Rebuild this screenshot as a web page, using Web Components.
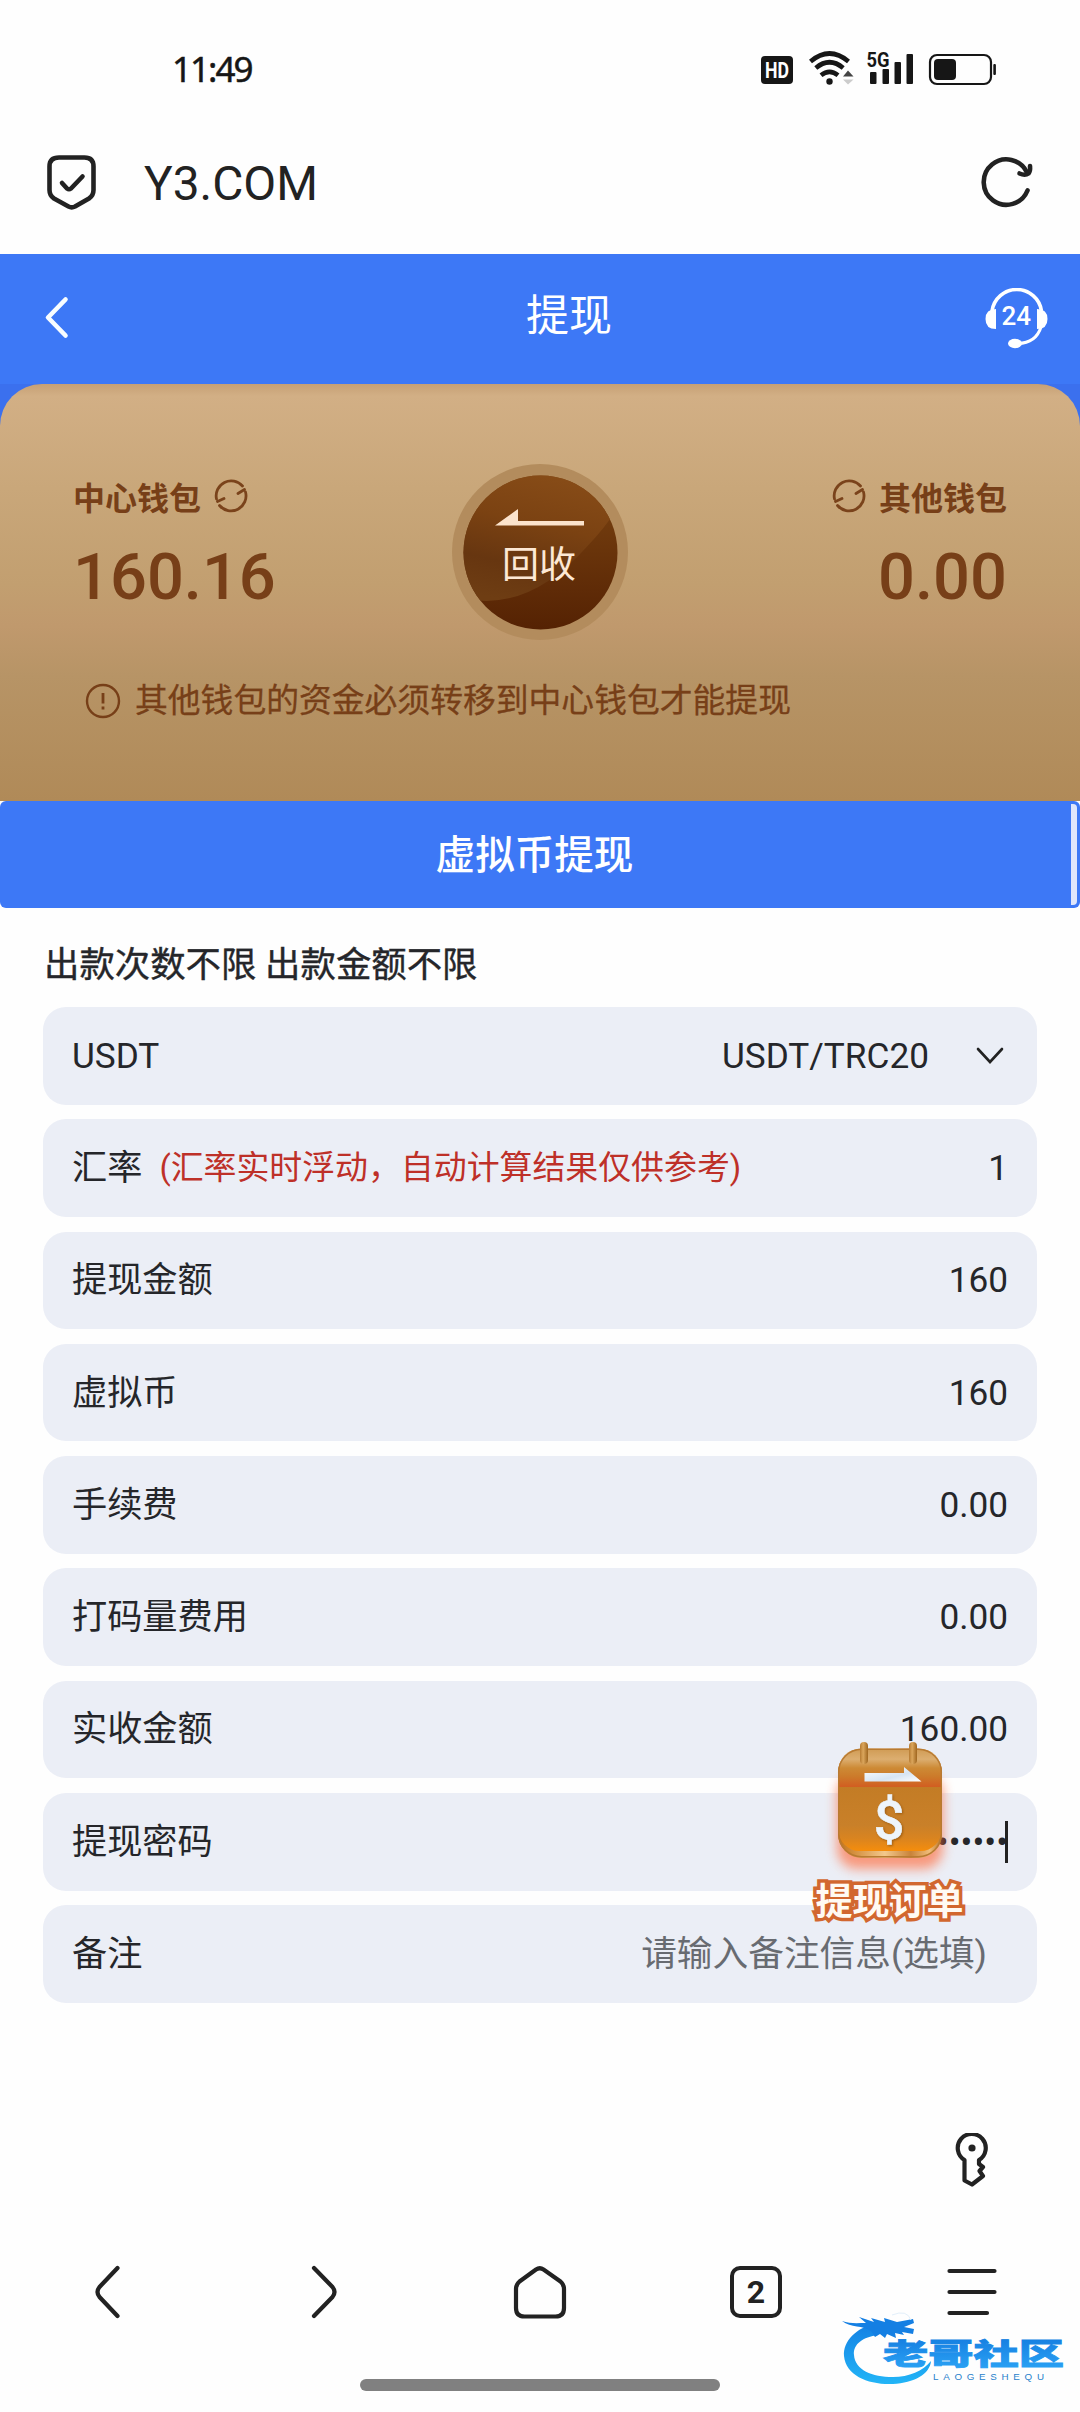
<!DOCTYPE html>
<html lang="zh-CN">
<head>
<meta charset="utf-8">
<title>提现</title>
<style>
  body {
    margin: 0;
    width: 1080px;
    height: 2412px;
    overflow: hidden;
    background: #fefefe;
    color: #25262a;
    font-family: Roboto, "Noto Sans CJK SC", sans-serif;
  }
</style>
</head>
<body>
<withdraw-app></withdraw-app>

<script>
class StatusBar extends HTMLElement {
  constructor() {
    super();

    this.attachShadow({mode: 'open'}).innerHTML = `
        <style>
          :host {
            display: flex;
            justify-content: space-between;
            height: 110px;
            box-sizing: border-box;
            padding: 48px 82px 0 172px;
            color: #161616;
          }
          .time {
            margin-top: -1px;
            font: 400 35px/44px "Noto Sans", sans-serif;
            letter-spacing: -2px;
            -webkit-text-stroke: .5px;
          }
          svg {
            display: block;
          }
        </style>
        <div class="time">11:49</div>
        <svg width="240" height="40" viewBox="758 48 240 40" fill="#161616">
          <rect x="761" y="56" width="32" height="28" rx="4"/>
          <text x="777" y="78.2" fill="#fff" font-family="Roboto" font-weight="700" font-size="22" text-anchor="middle" textLength="24" lengthAdjust="spacingAndGlyphs">HD</text>
          <g fill="none" stroke="#161616" stroke-width="4.6">
            <path d="M810.5 61.5Q829.5 45.5 848.5 61.5"/>
            <path d="M815.8 68Q829.5 56.5 843.2 68"/>
            <path d="M821 75.2Q829.5 68.5 838 75.2"/>
          </g>
          <circle cx="829.5" cy="81.5" r="3.2"/>
          <path d="M843 76.5L848 70.5L853.5 76.5Z" fill="#444"/>
          <path d="M843 79.5L848 84.5L853.5 79.5Z" fill="#ccc"/>
          <text x="866.5" y="66.8" font-family="Roboto" font-weight="700" font-size="20" textLength="23" lengthAdjust="spacingAndGlyphs">5G</text>
          <rect x="870" y="72" width="6.5" height="12" rx="1"/>
          <rect x="882.5" y="69" width="6.5" height="15" rx="1"/>
          <rect x="894.5" y="62" width="6.5" height="22" rx="1"/>
          <rect x="906.5" y="54" width="6.5" height="30" rx="1"/>
          <rect x="930" y="55" width="61" height="29" rx="7" fill="none" stroke="#161616" stroke-width="2.2"/>
          <rect x="934" y="59" width="22" height="21" rx="4"/>
          <rect x="993.3" y="64" width="2.6" height="11" rx="1"/>
        </svg>
    `;
  }
}

class AddressBar extends HTMLElement {
  constructor() {
    super();

    this.attachShadow({mode: 'open'}).innerHTML = `
        <style>
          :host {
            display: flex;
            align-items: center;
            height: 144px;
            box-sizing: border-box;
            padding: 0 46px;
            color: #222;
          }
          .url {
            flex: 1;
            margin-left: 46px;
            font-size: 47.8px;
            line-height: 60px;
            padding-top: 3px;
          }
          svg {
            fill: none;
            stroke: #222;
            stroke-width: 4.6;
            stroke-linecap: round;
            stroke-linejoin: round;
          }
        </style>
        <svg width="52" height="56" viewBox="46 155 52 56">
          <path d="M59 158.5H84.5Q93.5 158.5 93.5 167.5V191Q93.5 196.5 89 199.5L75 207.5Q71.7 209.2 68.5 207.5L54 199.5Q49.5 196.5 49.5 191V167.5Q49.5 158.5 59 158.5Z"/>
          <path d="M62 184L67 189.5Q69 191 71 189.5L82.5 177.5"/>
        </svg>
        <div class="url"><slot></slot></div>
        <svg width="54" height="54" viewBox="979 155 54 54">
          <path d="M1026.5 190.5A22.7 22.7 0 1 1 1026 172.5"/>
          <path d="M1018.5 173.5Q1024 176 1027.5 173.5Q1029.5 171.5 1029 166"/>
        </svg>
    `;
  }
}

class PageHeader extends HTMLElement {
  constructor() {
    super();

    this.attachShadow({mode: 'open'}).innerHTML = `
        <style>
          :host {
            display: flex;
            align-items: center;
            justify-content: space-between;
            height: 130px;
            box-sizing: border-box;
            padding: 0 30px 3px 40px;
            background: #3d78f6;
            color: #fff;
          }
          .title {
            margin-left: 80px;
            font-size: 43px;
            line-height: 60px;
            padding-bottom: 3px;
          }
          .service {
            margin-top: 2px;
          }
        </style>
        <svg width="34" height="48" viewBox="40 294 34 48" fill="none" stroke="#f8fdff" stroke-width="4.6" stroke-linecap="round" stroke-linejoin="round">
          <path d="M65.5 299.5L48 317.5L65.5 335.5"/>
        </svg>
        <div class="title"><slot></slot></div>
        <svg class="service" width="66" height="62" viewBox="984 288 66 62" fill="none" stroke="#fff" stroke-width="3.6">
          <path d="M992 311A25 25 0 0 1 1041.5 311"/>
          <path d="M1041 327Q1036 343 1018 343.5" stroke-width="3"/>
          <path d="M996 309V329Q985.5 329 985.5 319Q985.5 309 996 309ZM1037 309V329Q1047.5 329 1047.5 319Q1047.5 309 1037 309Z" fill="#fff" stroke="none"/>
          <ellipse cx="1015" cy="343.5" rx="7" ry="4.7" fill="#fff" stroke="none"/>
          <text x="1016.3" y="325.3" fill="#fff" stroke="none" font-family="Roboto" font-weight="500" font-size="26" text-anchor="middle">24</text>
        </svg>
    `;
  }
}

class WalletBalance extends HTMLElement {
  constructor() {
    super();

    this.attachShadow({mode: 'open'}).innerHTML = `
        <style>
          :host {
            display: flex;
            flex-direction: column;
            width: 300px;
          }
          .name {
            display: flex;
            align-items: center;
            gap: 13px;
            height: 40px;
            font-size: 32px;
            font-weight: 700;
          }
          .amount {
            margin-top: 20px;
            font-size: 65px;
            font-weight: 500;
            line-height: 82px;
          }
          :host([align="right"]) {
            align-items: flex-end;
          }
          :host([align="right"]) .name {
            flex-direction: row-reverse;
          }
        </style>
        <div class="name">
          <span>${this.getAttribute('name')}</span>
          <svg width="34" height="34" viewBox="0 0 34 34" fill="none" stroke="#7a431b" stroke-width="2.8" stroke-linecap="round">
            <path d="M2.5 20A15 15 0 0 1 28.5 7M3.5 22.5L10 19.5"/>
            <path d="M31.5 13A15 15 0 0 1 5.5 26.5M30.5 10.5L24 14.5"/>
          </svg>
        </div>
        <div class="amount">${this.getAttribute('amount')}</div>
    `;
  }
}

class RecycleButton extends HTMLElement {
  constructor() {
    super();

    this.attachShadow({mode: 'open'}).innerHTML = `
        <style>
          :host {
            display: block;
            width: 176px;
            height: 176px;
          }
          svg {
            display: block;
          }
        </style>
        <svg width="176" height="176" viewBox="452 463.5 176 176">
          <defs>
            <linearGradient id="base" x1="0" y1="0" x2="0" y2="1">
              <stop offset="0" stop-color="#7c4512"/>
              <stop offset="1" stop-color="#552203"/>
            </linearGradient>
            <linearGradient id="sheen" x1=".6" y1="0" x2=".3" y2="1">
              <stop offset="0" stop-color="#8b4f19"/>
              <stop offset=".45" stop-color="#7b4212"/>
              <stop offset=".75" stop-color="#673610"/>
              <stop offset="1" stop-color="#6e3d13"/>
            </linearGradient>
            <clipPath id="disc"><circle cx="540.5" cy="552" r="77"/></clipPath>
          </defs>
          <circle cx="540" cy="551.5" r="88" fill="#b38c5d"/>
          <circle cx="540.5" cy="552" r="77" fill="url(#base)"/>
          <path d="M450 460H640V470Q616 516 588 545Q535 605 478 600L450 590Z" fill="url(#sheen)" clip-path="url(#disc)"/>
          <path d="M495 525L518 508.5V520.5H584V525Z" fill="#fbe3cc"/>
          <text x="539" y="577.8" fill="#fde8d4" font-family="Noto Sans CJK SC, sans-serif" font-size="37" text-anchor="middle">回收</text>
        </svg>
    `;
  }
}

class WalletCard extends HTMLElement {
  constructor() {
    super();

    this.attachShadow({mode: 'open'}).innerHTML = `
        <style>
          :host {
            display: block;
            height: 417px;
            background: #3b70ee;
            color: #773f18;
          }
          .card {
            height: 417px;
            box-sizing: border-box;
            padding: 80px 73px 0;
            border-radius: 42px 42px 0 0;
            background: linear-gradient(#c6a075 0, #d2af85 12px, #c9a77a 25%, #c29f70 48%, #c0996d 58%, #b79466 70%, #b08a58 100%);
          }
          .top {
            display: flex;
            justify-content: space-between;
            align-items: flex-start;
          }
          wallet-balance {
            margin-top: 12px;
          }
          .notice {
            display: flex;
            align-items: center;
            gap: 14px;
            margin: 37px 0 0 12px;
            font-size: 32.8px;
            line-height: 48px;
            -webkit-text-stroke: .3px;
          }
        </style>
        <div class="card">
          <div class="top">
            <wallet-balance name="中心钱包" amount="160.16"></wallet-balance>
            <recycle-button></recycle-button>
            <wallet-balance name="其他钱包" amount="0.00" align="right"></wallet-balance>
          </div>
          <div class="notice">
            <svg width="36" height="36" viewBox="0 0 36 36" fill="none" stroke="#773f18" stroke-width="2.4">
              <circle cx="18" cy="18" r="16"/>
              <path d="M18 10V20.5M18 23.5V26.5" stroke-width="2.8"/>
            </svg>
            <slot></slot>
          </div>
        </div>
    `;
  }
}

class MethodTab extends HTMLElement {
  constructor() {
    super();

    this.attachShadow({mode: 'open'}).innerHTML = `
        <style>
          :host {
            display: flex;
            height: 107px;
            box-sizing: border-box;
            padding: 3px;
            border-radius: 6px;
            background: #3d78f6;
            color: #fff;
            font-size: 39.6px;
            font-weight: 500;
            line-height: 104px;
          }
          .name {
            flex: 1;
            text-align: center;
            padding-right: 5px;
          }
          .next {
            width: 6px;
            border-radius: 0 4px 4px 0;
            background: #dfe6fb;
          }
        </style>
        <div class="name"><slot></slot></div>
        <div class="next"></div>
    `;
  }
}

class FormRow extends HTMLElement {
  constructor() {
    super();

    this.attachShadow({mode: 'open'}).innerHTML = `
        <style>
          :host {
            display: flex;
            align-items: center;
            height: 97.6px;
            box-sizing: border-box;
            padding: 0 29px;
            border-radius: 23px;
            background: #ebeef6;
            font-size: 35.2px;
            line-height: 50px;
          }
          .hint {
            margin-left: 17px;
            font-size: 32.9px;
            color: #be3028;
          }
          .value {
            display: flex;
            align-items: center;
            margin-left: auto;
          }
        </style>
        <span>${this.getAttribute('label')}</span>
        <span class="hint">${this.getAttribute('hint') || ''}</span>
        <span class="value"><slot></slot></span>
    `;
  }
}

class OrderButton extends HTMLElement {
  constructor() {
    super();

    this.attachShadow({mode: 'open'}).innerHTML = `
        <style>
          /* floats over the form */
          :host {
            position: absolute;
            left: 804px;
            top: 1732px;
            width: 172px;
            height: 200px;
          }
          svg {
            display: block;
          }
        </style>
        <svg width="172" height="200" viewBox="804 1732 172 200">
          <defs>
            <linearGradient id="lid" x1="0" y1="0" x2="0" y2="1">
              <stop offset="0" stop-color="#cf9a52"/>
              <stop offset=".28" stop-color="#dcae70"/>
              <stop offset=".5" stop-color="#cd8a35"/>
              <stop offset=".72" stop-color="#cc7a2a"/>
              <stop offset="1" stop-color="#d35a20"/>
            </linearGradient>
            <linearGradient id="body" x1="0" y1="0" x2="0" y2="1">
              <stop offset="0" stop-color="#c37c25"/>
              <stop offset=".6" stop-color="#c98029"/>
              <stop offset=".8" stop-color="#d98420"/>
              <stop offset="1" stop-color="#f58d0c"/>
            </linearGradient>
            <linearGradient id="rim">
              <stop offset="0" stop-color="#c37217"/>
              <stop offset=".45" stop-color="#f3c88c"/>
              <stop offset=".7" stop-color="#c8833a"/>
              <stop offset=".88" stop-color="#f0bd7a"/>
              <stop offset="1" stop-color="#b9711f"/>
            </linearGradient>
            <linearGradient id="peg">
              <stop offset="0" stop-color="#b67b32"/>
              <stop offset=".4" stop-color="#dba65c"/>
              <stop offset="1" stop-color="#9f661f"/>
            </linearGradient>
            <linearGradient id="arrow" x1="0" y1="0" x2="1" y2="1">
              <stop offset="0" stop-color="#fff"/>
              <stop offset=".6" stop-color="#d7e5f3"/>
              <stop offset="1" stop-color="#fff"/>
            </linearGradient>
            <clipPath id="face"><rect x="838.5" y="1749" width="103" height="102" rx="21"/></clipPath>
            <filter id="glow" x="-30%" y="-30%" width="160%" height="160%"><feGaussianBlur stdDeviation="6"/></filter>
          </defs>
          <rect x="837" y="1774" width="106" height="95" rx="20" fill="#ff6a3a" opacity=".65" filter="url(#glow)"/>
          <rect x="838" y="1748.5" width="104" height="109.5" rx="24" fill="url(#rim)"/>
          <g clip-path="url(#face)">
            <rect x="838" y="1748" width="104" height="40" fill="url(#lid)"/>
            <rect x="838" y="1787" width="104" height="64" fill="url(#body)"/>
          </g>
          <rect x="838.7" y="1749.2" width="102.6" height="107.6" rx="23" fill="none" stroke="#b87a32" stroke-width="1.4"/>
          <rect x="860" y="1742" width="8" height="22" rx="4" fill="url(#peg)"/>
          <rect x="909" y="1742" width="8" height="22" rx="4" fill="url(#peg)"/>
          <path d="M864.5 1773H904V1767L921.5 1781.5H864.5Z" fill="url(#arrow)"/>
          <text x="889" y="1838.5" fill="#eef5fb" stroke="#eef5fb" stroke-width=".6" font-family="Roboto" font-weight="500" font-size="54" text-anchor="middle" style="filter: drop-shadow(1px 1px 1px #9b5c14)">$</text>
          <text x="889.5" y="1914.5" fill="#fffaf3" stroke="#d2672f" stroke-width="7" paint-order="stroke" font-family="Noto Sans CJK SC, sans-serif" font-weight="700" font-size="37" text-anchor="middle">提现订单</text>
        </svg>
    `;
  }
}

class NavBar extends HTMLElement {
  constructor() {
    super();

    this.attachShadow({mode: 'open'}).innerHTML = `
        <style>
          :host {
            display: block;
            color: #222;
          }
          .key {
            display: block;
            margin: 0 90px 0 auto;
          }
          .items {
            display: grid;
            grid-template-columns: repeat(5, 216px);
            justify-items: center;
            margin-top: 75px;
          }
          svg {
            fill: none;
            stroke: #222;
            stroke-width: 4.2;
            stroke-linecap: round;
            stroke-linejoin: round;
          }
          .tabs {
            box-sizing: border-box;
            width: 52px;
            height: 52px;
            margin-top: 2px;
            border: 4.2px solid #222;
            border-radius: 10px;
            text-align: center;
            font: 700 32px/44px Roboto, sans-serif;
          }
          .handle {
            width: 360px;
            height: 12px;
            margin: 59px auto 0;
            border-radius: 6px;
            background: #808080;
          }
        </style>
        <svg class="key" width="36" height="56" viewBox="954 2132 36 56">
          <path d="M964.5 2159A14 14 0 1 1 979 2159V2163L983 2166L979.5 2170L983 2175L972 2183.5L964.5 2179.5Z"/>
          <circle cx="972" cy="2147" r="3.6" fill="#222" stroke="none"/>
        </svg>
        <div class="items">
          <svg width="56" height="56" viewBox="80 2264 56 56"><path d="M117.5 2268L99.5 2287Q95.5 2292 99.5 2297L117.5 2316"/></svg>
          <svg width="56" height="56" viewBox="296 2264 56 56"><path d="M314 2268L332.5 2287Q336.5 2292 332.5 2297L314 2316"/></svg>
          <svg width="56" height="56" viewBox="512 2264 56 56"><path d="M536 2269.5Q539.8 2267 543.5 2269.5L560.5 2281.5Q564 2284.5 564 2289V2308Q564 2316.5 555.5 2316.5H524.5Q516 2316.5 516 2308V2289Q516 2284.5 519.5 2281.5Z"/></svg>
          <div class="tabs">2</div>
          <svg width="56" height="56" viewBox="944 2264 56 56"><path d="M949.5 2271H994.5M949.5 2292H994.5M949.5 2313H987"/></svg>
        </div>
        <div class="handle"></div>
    `;
  }
}

class CommunityLogo extends HTMLElement {
  constructor() {
    super();

    this.attachShadow({mode: 'open'}).innerHTML = `
        <style>
          :host {
            position: absolute;
            left: 836px;
            top: 2308px;
            width: 236px;
            height: 84px;
          }
        </style>
        <svg width="236" height="84" viewBox="836 2308 236 84">
          <defs>
            <linearGradient id="sea" gradientUnits="userSpaceOnUse" x1="0" y1="2322" x2="0" y2="2384">
              <stop offset="0" stop-color="#147fe3"/>
              <stop offset="1" stop-color="#22b5f7"/>
            </linearGradient>
            <linearGradient id="word" gradientUnits="userSpaceOnUse" x1="0" y1="2340" x2="0" y2="2370">
              <stop offset="0" stop-color="#1781e2"/>
              <stop offset="1" stop-color="#2ba3f5"/>
            </linearGradient>
          </defs>
          <path d="M876 2323C856 2328 843 2341 844 2356C846 2376 869 2385 893 2384C914 2383 930 2374 931 2361C923 2371 909 2377 893 2377C872 2377 855 2370 854 2355C853 2344 863 2337 878 2335Z" fill="url(#sea)"/>
          <path d="M842 2321C850 2324 858 2323 866 2323L859 2317L874 2322L871 2318L885 2322L884 2318L897 2322L913 2319L914 2323L904 2327L914 2329L913 2334L902 2332L904 2335L895 2333L896 2338L887 2334L885 2338L880 2334L875 2337L871 2331C863 2325 851 2328 842 2321Z" fill="#147fe3"/>
          <path d="M892 2315Q907 2309 911 2320" fill="none" stroke="#e2effa"/>
          <text x="883" y="2365" fill="url(#word)" stroke="url(#word)" stroke-width=".8" font-family="Noto Sans CJK SC, sans-serif" font-weight="900" font-size="29" textLength="181" lengthAdjust="spacingAndGlyphs">老哥社区</text>
          <text x="933" y="2379.5" fill="#2a82cc" font-family="Liberation Sans" font-size="9.8" textLength="111">LAOGESHEQU</text>
        </svg>
    `;
  }
}

class WithdrawApp extends HTMLElement {
  constructor() {
    super();

    this.attachShadow({mode: 'open'}).innerHTML = `
        <style>
          :host {
            display: block;
            position: relative;
            width: 1080px;
            height: 2412px;
          }
          .limit {
            height: 99px;
            box-sizing: border-box;
            padding: 32px 44px 0;
            font-size: 35.4px;
            line-height: 50px;
            -webkit-text-stroke: .4px;
          }
          .form {
            display: flex;
            flex-direction: column;
            gap: 14.7px;
            padding: 0 43px;
          }
          .arrow {
            margin: 0 4px 0 47px;
          }
          .caret {
            width: 3px;
            height: 42px;
            margin-left: -3px;
            background: #222;
          }
          .placeholder {
            color: #686b71;
            margin-right: 21px;
            font-size: 35.7px;
          }
          nav-bar {
            margin-top: 130.5px;
          }
        </style>
        <status-bar></status-bar>
        <address-bar>Y3.COM</address-bar>
        <page-header>提现</page-header>
        <wallet-card>其他钱包的资金必须转移到中心钱包才能提现</wallet-card>
        <method-tab>虚拟币提现</method-tab>
        <div class="limit">出款次数不限 出款金额不限</div>
        <div class="form">
          <form-row label="USDT">
            USDT/TRC20
            <svg class="arrow" width="28" height="18" viewBox="0 0 28 18" fill="none" stroke="#222" stroke-width="2.6" stroke-linecap="round"><path d="M2 2L14 15L26 2"/></svg>
          </form-row>
          <form-row label="汇率" hint="(汇率实时浮动，自动计算结果仅供参考)">1</form-row>
          <form-row label="提现金额">160</form-row>
          <form-row label="虚拟币">160</form-row>
          <form-row label="手续费">0.00</form-row>
          <form-row label="打码量费用">0.00</form-row>
          <form-row label="实收金额">160.00</form-row>
          <form-row label="提现密码">••••••<span class="caret"></span></form-row>
          <form-row label="备注"><span class="placeholder">请输入备注信息(选填)</span></form-row>
        </div>
        <nav-bar></nav-bar>
        <order-button></order-button>
        <community-logo></community-logo>
    `;
  }
}

customElements.define('status-bar', StatusBar);
customElements.define('address-bar', AddressBar);
customElements.define('page-header', PageHeader);
customElements.define('wallet-balance', WalletBalance);
customElements.define('recycle-button', RecycleButton);
customElements.define('wallet-card', WalletCard);
customElements.define('method-tab', MethodTab);
customElements.define('form-row', FormRow);
customElements.define('order-button', OrderButton);
customElements.define('nav-bar', NavBar);
customElements.define('community-logo', CommunityLogo);
customElements.define('withdraw-app', WithdrawApp);
</script>
</body>
</html>
